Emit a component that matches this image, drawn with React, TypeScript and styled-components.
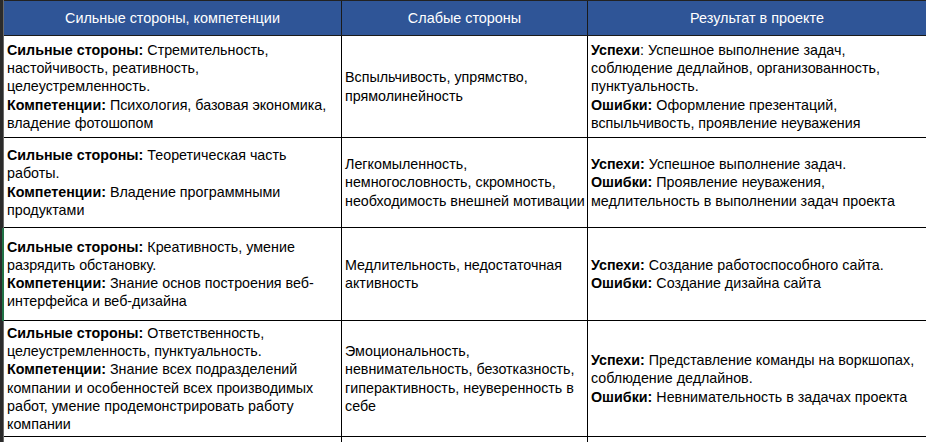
import styled, { createGlobalStyle } from "styled-components";

const GlobalStyle = createGlobalStyle`
  html, body {
    margin: 0;
    padding: 0;
    background: #fff;
  }
  body {
    font-family: "Liberation Sans", Arial, sans-serif;
    overflow: hidden;
  }
`;

const Page = styled.div`
  display: flex;
  width: 926px;
  height: 442px;
  overflow: hidden;
`;

const Gutter = styled.div`
  width: 4px;
  flex: none;
  display: flex;
  flex-direction: column;
  background: #2b2b2b;
  border-right: 1px solid #6b6b6b;
  box-sizing: border-box;
`;

const GutterPiece = styled.div<{ $h: number; $active?: boolean }>`
  height: ${(p) => p.$h}px;
  flex: none;
  box-sizing: border-box;
  border-right: ${(p) => (p.$active ? "2px solid #217346" : "none")};
  margin-right: ${(p) => (p.$active ? "-1px" : "0")};
`;

const Sheet = styled.div`
  flex: 1;
  display: grid;
  grid-template-columns: 338px 246px 1fr;
  grid-template-rows: 35px 102px 90px 93px 116px 20px;
  border-top: 1px solid #222;
`;

const HeadCell = styled.div<{ $last?: boolean }>`
  background: #2f5597;
  color: #fff;
  font-size: 14.4px;
  display: flex;
  align-items: center;
  justify-content: center;
  white-space: nowrap;
  border-bottom: 1px solid #1a1a1a;
  border-right: ${(p) => (p.$last ? "none" : "1px solid #1a1a1a")};
  box-sizing: border-box;
`;

const Cell = styled.div<{ $last?: boolean }>`
  display: flex;
  flex-direction: column;
  justify-content: center;
  padding: 0 0 0 3px;
  font-size: 14.3px;
  line-height: 18.2px;
  color: #000;
  white-space: nowrap;
  border-bottom: 1px solid #000;
  border-right: ${(p) => (p.$last ? "none" : "1px solid #000")};
  box-sizing: border-box;
  overflow: hidden;
`;

const Line = styled.div``;

const Label = styled.b`
  font-weight: bold;
`;

// each line: [bold part, regular part]
type Row = [string, string][];

const rows: { strong: Row; weak: Row; result: Row }[] = [
  {
    strong: [
      ["Сильные стороны:", " Стремительность,"],
      ["", "настойчивость, реативность,"],
      ["", "целеустремленность."],
      ["Компетенции:", " Психология, базовая экономика,"],
      ["", "владение фотошопом"],
    ],
    weak: [
      ["", "Вспыльчивость, упрямство,"],
      ["", "прямолинейность"],
    ],
    result: [
      ["Успехи", ": Успешное выполнение задач,"],
      ["", "соблюдение дедлайнов, организованность,"],
      ["", "пунктуальность."],
      ["Ошибки:", " Оформление презентаций,"],
      ["", "вспыльчивость, проявление неуважения"],
    ],
  },
  {
    strong: [
      ["Сильные стороны:", " Теоретическая часть"],
      ["", "работы."],
      ["Компетенции:", " Владение программными"],
      ["", "продуктами"],
    ],
    weak: [
      ["", "Легкомыленность,"],
      ["", "немногословность, скромность,"],
      ["", "необходимость внешней мотивации"],
    ],
    result: [
      ["Успехи:", " Успешное выполнение задач."],
      ["Ошибки:", " Проявление неуважения,"],
      ["", "медлительность в выполнении задач проекта"],
    ],
  },
  {
    strong: [
      ["Сильные стороны:", " Креативность, умение"],
      ["", "разрядить обстановку."],
      ["Компетенции:", " Знание основ построения веб-"],
      ["", "интерфейса и веб-дизайна"],
    ],
    weak: [
      ["", "Медлительность, недостаточная"],
      ["", "активность"],
    ],
    result: [
      ["Успехи:", " Создание работоспособного сайта."],
      ["Ошибки:", " Создание дизайна сайта"],
    ],
  },
  {
    strong: [
      ["Сильные стороны:", " Ответственность,"],
      ["", "целеустремленность, пунктуальность."],
      ["Компетенции:", " Знание всех подразделений"],
      ["", "компании и особенностей всех производимых"],
      ["", "работ, умение продемонстрировать работу"],
      ["", "компании"],
    ],
    weak: [
      ["", "Эмоциональность,"],
      ["", "невнимательность, безотказность,"],
      ["", "гиперактивность, неуверенность в"],
      ["", "себе"],
    ],
    result: [
      ["Успехи:", " Представление команды на воркшопах,"],
      ["", "соблюдение дедлайнов."],
      ["Ошибки:", " Невнимательность в задачах проекта"],
    ],
  },
];

function Lines({ lines }: { lines: Row }) {
  return (
    <>
      {lines.map(([b, t], i) => (
        <Line key={i}>
          {b && <Label>{b}</Label>}
          {t}
        </Line>
      ))}
    </>
  );
}

export default function App() {
  return (
    <>
      <GlobalStyle />
      <Page>
        <Gutter>
          <GutterPiece $h={36} />
          <GutterPiece $h={102} />
          <GutterPiece $h={90} />
          <GutterPiece $h={93} $active />
          <GutterPiece $h={121} />
        </Gutter>
        <Sheet>
          <HeadCell>Сильные стороны, компетенции</HeadCell>
          <HeadCell>Слабые стороны</HeadCell>
          <HeadCell $last>Результат в проекте</HeadCell>
          {rows.flatMap((r, i) => [
            <Cell key={`s${i}`}>
              <Lines lines={r.strong} />
            </Cell>,
            <Cell key={`w${i}`}>
              <Lines lines={r.weak} />
            </Cell>,
            <Cell key={`r${i}`} $last>
              <Lines lines={r.result} />
            </Cell>,
          ])}
          <Cell />
          <Cell />
          <Cell $last />
        </Sheet>
      </Page>
    </>
  );
}
